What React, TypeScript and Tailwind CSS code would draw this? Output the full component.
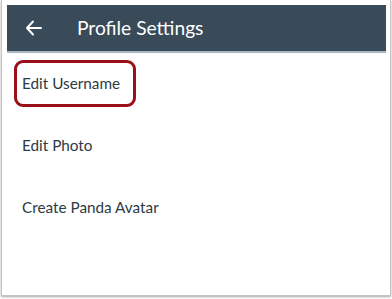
export default function App() {
  return (
    <div className="h-[299px] w-[392px] bg-white font-['Lato','Liberation_Sans',sans-serif]">
      <div className="ml-[1px] h-[296px] w-[390px] border-x border-b border-[#c4c4c4] pl-[5px] pr-[4px] pt-[5px] shadow-[0_1px_2px_rgba(0,0,0,0.35)]">
        {/* Header */}
        <div className="box-content flex h-[46px] items-center border-b-2 border-[#aab6c1] bg-[#394b58]">
          <div className="flex w-[70px] items-center pl-[18px]">
            <svg width="18" height="18" viewBox="0 0 18 18" fill="none" stroke="white" strokeWidth="2" strokeLinecap="round" strokeLinejoin="round">
              <path d="M16 9H2M8 2.5L2 9l6 6.5" />
            </svg>
          </div>
          <span className="text-[19.2px] text-white">Profile Settings</span>
        </div>

        {/* Items */}
        <div className="-mt-[1px] flex flex-col">
          <div className="flex h-[62px] items-center pl-[7px]">
            <span className="flex h-[47px] w-[122px] items-center rounded-[9px] border-[3px] border-[#9a1018] pl-[5px] text-[15.3px] text-[#2d3b45]">
              Edit Username
            </span>
          </div>
          <div className="flex h-[62px] items-center pl-[15px] text-[15.3px] text-[#2d3b45]">Edit Photo</div>
          <div className="flex h-[62px] items-center pl-[15px] text-[15.3px] text-[#2d3b45]">Create Panda Avatar</div>
        </div>
      </div>
    </div>
  );
}
